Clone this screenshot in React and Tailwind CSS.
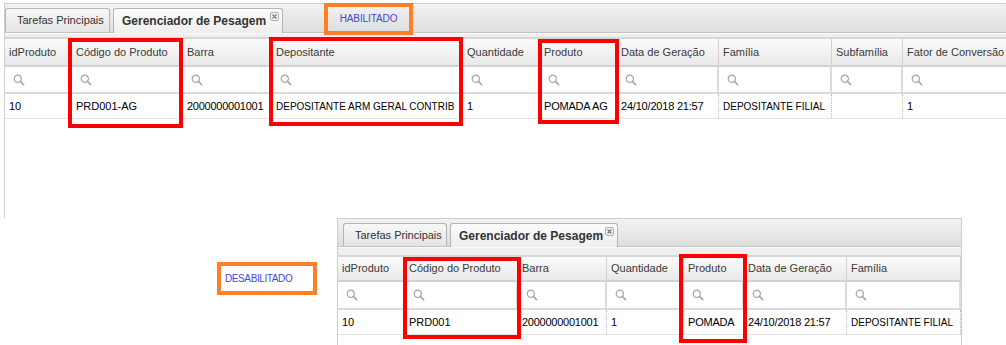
import React from "react";

const topCols = [
  { h: "idProduto", w: "w-[67px]", v: "10", t: "text-[11px]" },
  { h: "Código do Produto", w: "w-[111px]", v: "PRD001-AG", t: "text-[11px]" },
  { h: "Barra", w: "w-[89px]", v: "2000000001001", t: "text-[11px] tracking-[-0.25px]" },
  { h: "Depositante", w: "w-[191px]", v: "DEPOSITANTE ARM GERAL CONTRIB", t: "text-[10px]" },
  { h: "Quantidade", w: "w-[77px]", v: "1", t: "text-[11px]" },
  { h: "Produto", w: "w-[77px]", v: "POMADA AG", t: "text-[11px] tracking-[-0.2px]" },
  { h: "Data de Geração", w: "w-[102px]", v: "24/10/2018 21:57", t: "text-[11px] tracking-[-0.2px]" },
  { h: "Família", w: "w-[113px]", v: "DEPOSITANTE FILIAL", t: "text-[10px]" },
  { h: "Subfamília", w: "w-[71px]", v: "", t: "text-[11px]" },
  { h: "Fator de Conversão", w: "w-[110px]", v: "1", t: "text-[11px]" },
];

const bottomCols = [
  { h: "idProduto", w: "w-[67px]", v: "10", t: "text-[11px]" },
  { h: "Código do Produto", w: "w-[113px]", v: "PRD001", t: "text-[11px]" },
  { h: "Barra", w: "w-[89px]", v: "2000000001001", t: "text-[11px] tracking-[-0.25px]" },
  { h: "Quantidade", w: "w-[77px]", v: "1", t: "text-[11px]" },
  { h: "Produto", w: "w-[60px]", v: "POMADA", t: "text-[11px] tracking-[-0.2px]" },
  { h: "Data de Geração", w: "w-[103px]", v: "24/10/2018 21:57", t: "text-[11px] tracking-[-0.2px]" },
  { h: "Família", w: "w-[114px]", v: "DEPOSITANTE FILIAL", t: "text-[10px]" },
];

const topCfg = {
  strip: "h-[29px] pl-0",
  tab1: "w-[105px] h-[24px]",
  tab2: "w-[170px] h-[25px]",
  band: "h-[6px]",
  head: "h-[28px]",
  filter: "h-[27px]",
  row: "h-[25px]",
};

const bottomCfg = {
  strip: "h-[28px] pl-[5px]",
  tab1: "w-[104px] h-[23px]",
  tab2: "w-[168px] h-[24px]",
  band: "h-[10px]",
  head: "h-[25px]",
  filter: "h-[28px]",
  row: "h-[25px]",
};

function Magnifier() {
  return (
    <svg width="12" height="12" viewBox="0 0 12 12" className="shrink-0">
      <circle cx="4.8" cy="4.8" r="3.6" fill="none" stroke="#a6a6a6" strokeWidth="1.2" />
      <line x1="7.4" y1="7.4" x2="10.6" y2="10.6" stroke="#a6a6a6" strokeWidth="1.6" strokeLinecap="round" />
    </svg>
  );
}

function CloseIcon() {
  return (
    <span className="w-[9px] h-[9px] rounded-[2px] border border-[#b0b0b0] bg-[#f4f4f4] flex items-center justify-center">
      <svg width="5" height="5" viewBox="0 0 5 5">
        <path d="M0.5 0.5 L4.5 4.5 M4.5 0.5 L0.5 4.5" stroke="#7a7a7a" strokeWidth="1.2" />
      </svg>
    </span>
  );
}

function Panel({ cols, cfg }) {
  return (
    <div className="flex flex-col">
      <div
        className={`flex items-end gap-[3px] border-b border-[#c4c4c4] bg-gradient-to-b from-[#f2f2f2] to-[#dedede] ${cfg.strip}`}
      >
        <div
          className={`flex items-center whitespace-nowrap rounded-t-[3px] border border-b-0 border-[#b4b4b4] bg-gradient-to-b from-[#f8f8f8] to-[#e4e4e4] pl-[11px] text-[11px] text-[#333] ${cfg.tab1}`}
        >
          Tarefas Principais
        </div>
        <div
          className={`-mb-px flex items-start justify-between whitespace-nowrap rounded-t-[3px] border border-b-0 border-[#b4b4b4] bg-gradient-to-b from-[#fcfcfc] to-[#eeeeee] pl-[8px] pr-[3px] text-[12px] font-bold text-[#333] ${cfg.tab2}`}
        >
          <span className="self-center">Gerenciador de Pesagem</span>
          <span className="mt-[3px]">
            <CloseIcon />
          </span>
        </div>
      </div>
      <div className={`flex flex-col justify-between bg-[#efefef] ${cfg.band}`}>
        <div className="h-[1px] bg-[#fafafa]" />
        <div className="h-[2px] bg-[#d6d6d6]" />
      </div>
      <div className={`flex border-b-2 border-[#d2d2d2] bg-gradient-to-b from-[#fbfbfb] to-[#e9e9e9] ${cfg.head}`}>
        {cols.map((c) => (
          <div
            key={c.h}
            className={`flex items-center shrink-0 border-r border-[#d2d2d2] pl-[4px] text-[11px] text-[#3a3a3a] whitespace-nowrap overflow-hidden ${c.w}`}
          >
            {c.h}
          </div>
        ))}
      </div>
      <div className={`flex border-b-2 border-[#dadada] bg-white ${cfg.filter}`}>
        {cols.map((c) => (
          <div
            key={c.h}
            className={`flex items-center shrink-0 border-r-2 border-[#dcdcdc] pl-[8px] ${c.w}`}
          >
            <Magnifier />
          </div>
        ))}
      </div>
      <div className={`flex border-b border-[#e4e4e4] bg-white ${cfg.row}`}>
        {cols.map((c) => (
          <div
            key={c.h}
            className={`flex items-center shrink-0 border-r border-dotted border-[#b8b8b8] pl-[4px] text-black whitespace-nowrap overflow-hidden ${c.w} ${c.t}`}
          >
            {c.v}
          </div>
        ))}
      </div>
    </div>
  );
}

export default function App() {
  return (
    <div className="relative w-[1006px] h-[345px] overflow-hidden bg-white font-['Liberation_Sans',Arial,sans-serif]">
      <div className="ml-[4px] mt-[3px] h-[215px] border-l border-t border-[#cfcfcf]">
        <Panel cols={topCols} cfg={topCfg} />
      </div>
      <div className="ml-[337px] w-[625px] h-[127px] border-l border-r border-t border-[#cfcfcf]">
        <Panel cols={bottomCols} cfg={bottomCfg} />
      </div>

      {/* annotations drawn over the screenshots */}
      <div className="absolute left-[324px] top-[3px] w-[89px] h-[32px] border-4 border-[#ff7f27] flex justify-center pt-[4px] text-[10px] tracking-[-0.1px] text-[#4646e0]">
        HABILITADO
      </div>
      <div className="absolute left-[217px] top-[262px] w-[100px] h-[33px] border-4 border-[#ff7f27] bg-white flex items-center pl-[4px] text-[10px] tracking-[-0.4px] text-[#4646e0]">
        DESABILITADO
      </div>

      <div className="absolute left-[68px] top-[38px] w-[115px] h-[90px] border-4 border-[#ff0000]" />
      <div className="absolute left-[269px] top-[37px] w-[194px] h-[89px] border-4 border-[#ff0000]" />
      <div className="absolute left-[538px] top-[39px] w-[81px] h-[85px] border-4 border-[#ff0000]" />
      <div className="absolute left-[403px] top-[257px] w-[118px] h-[82px] border-4 border-[#ff0000]" />
      <div className="absolute left-[679px] top-[254px] w-[68px] h-[89px] border-4 border-[#ff0000]" />
    </div>
  );
}
